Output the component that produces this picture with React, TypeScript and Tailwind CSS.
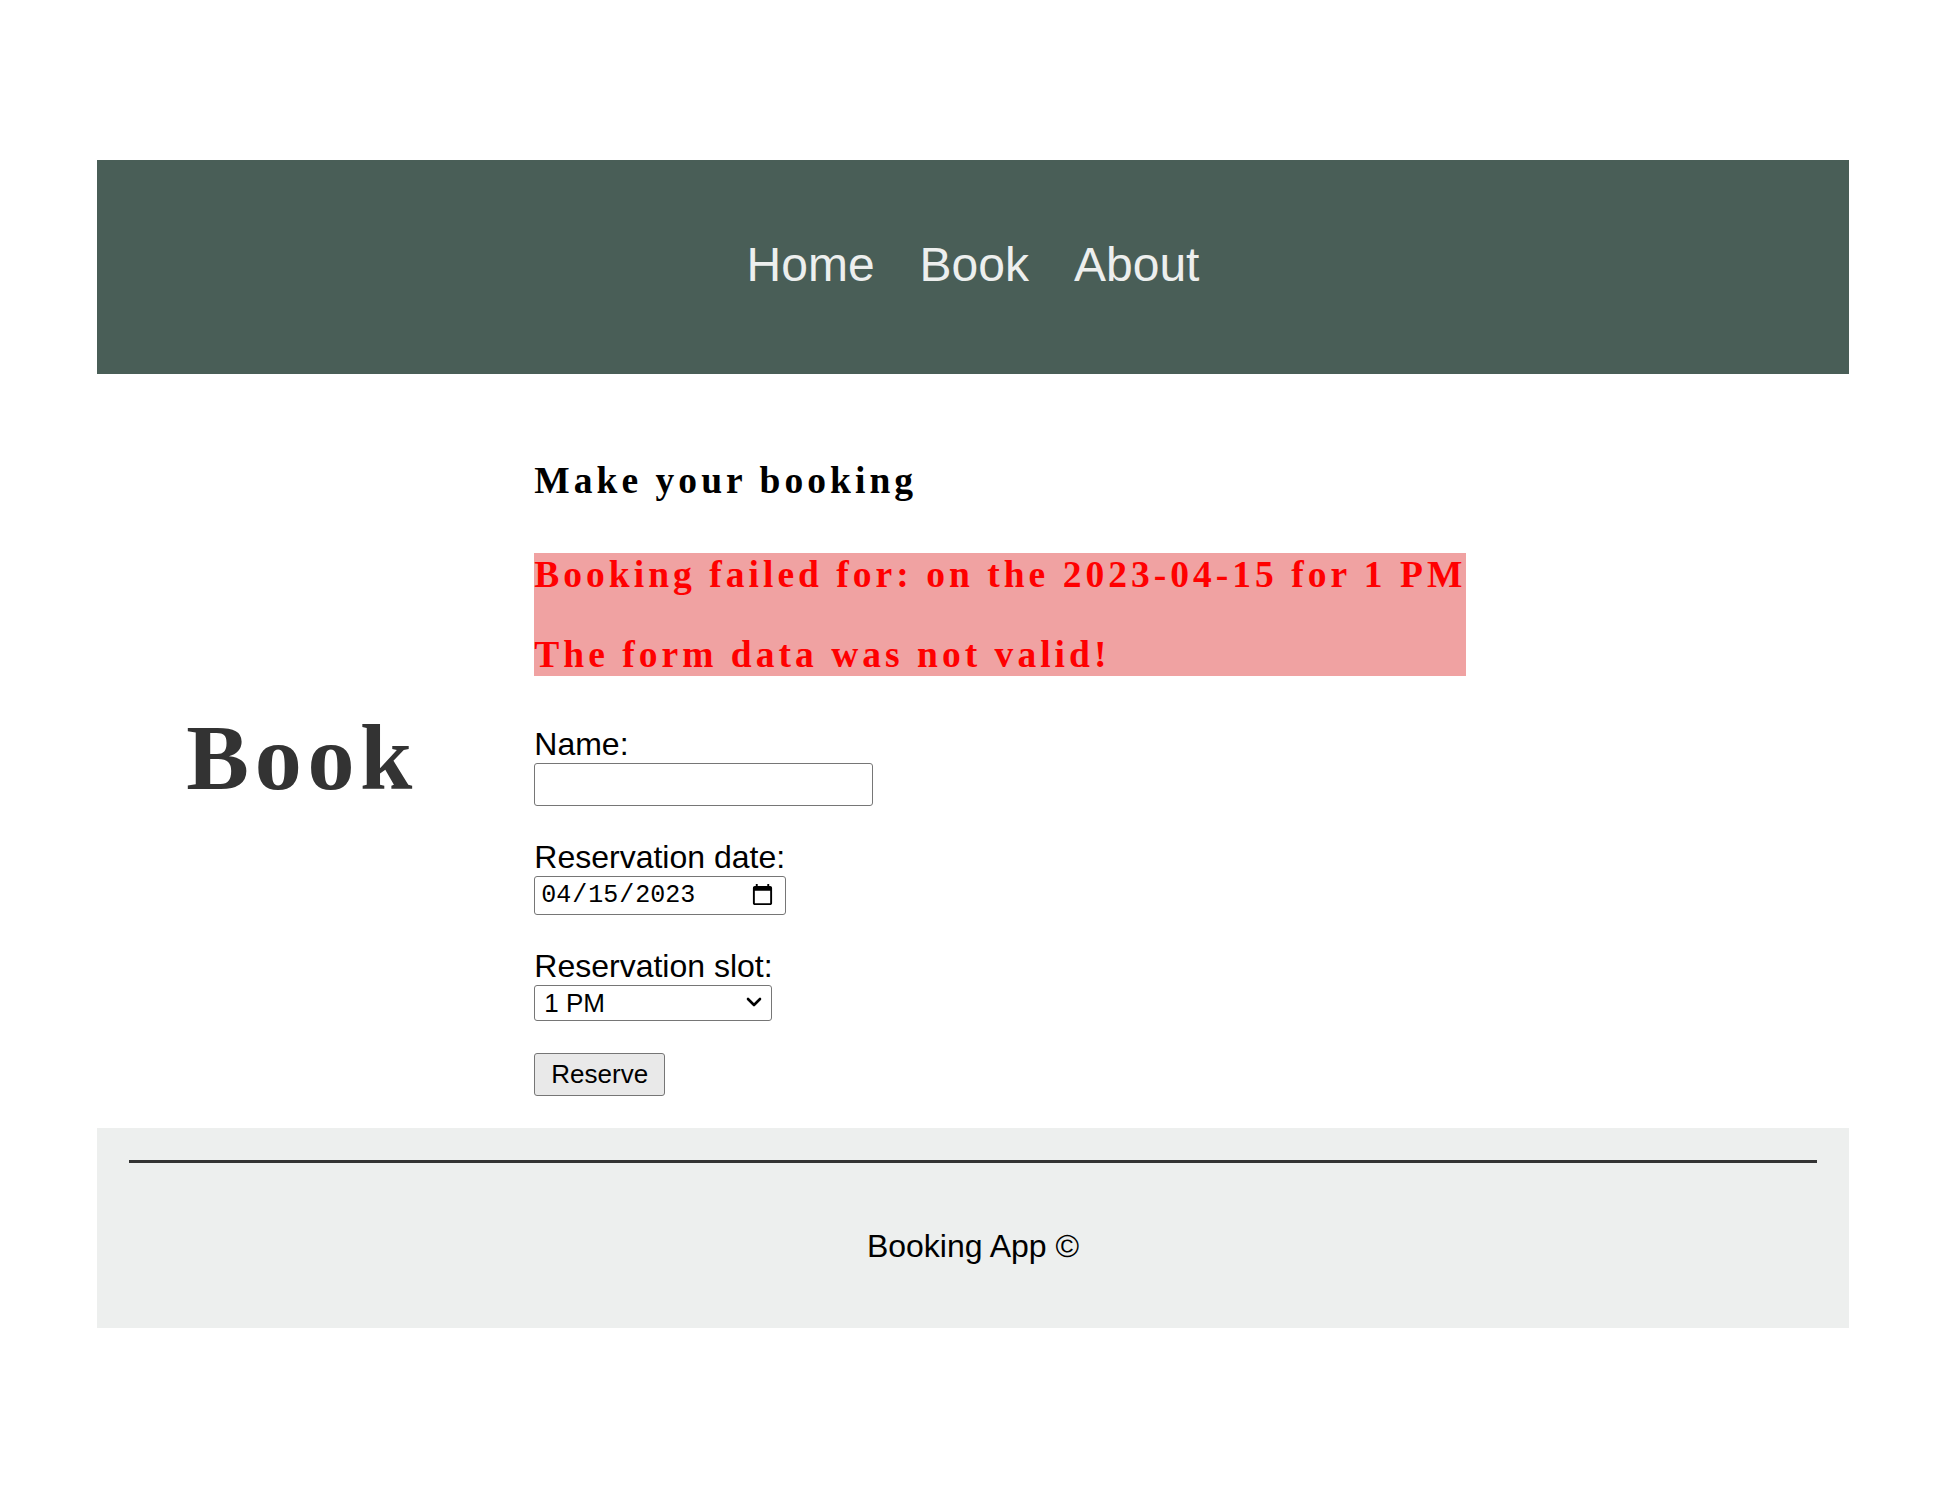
import React, { useState } from 'react';

const serif = "font-['Liberation_Serif','Times_New_Roman',serif]";
const sans = "font-['Liberation_Sans',Arial,sans-serif]";

function Header() {
  return (
    <header className="mx-auto flex h-[214px] w-[90%] items-center justify-center bg-[#495e57] pb-[5px]">
      <nav className={`${sans} flex gap-[45px] text-[48px] leading-[55px] text-[#edefee]`}>
        <a href="#">Home</a>
        <a href="#">Book</a>
        <a href="#">About</a>
      </nav>
    </header>
  );
}

function BookingForm() {
  const [name, setName] = useState('');
  const [date, setDate] = useState('2023-04-15');
  const [slot, setSlot] = useState('1 PM');

  function handleSubmit(e: React.FormEvent<HTMLFormElement>) {
    e.preventDefault();
  }

  return (
    <form onSubmit={handleSubmit} className={`${sans} mt-[49px] text-[32px] leading-[38px] text-black`}>
      <label htmlFor="name" className="block">
        Name:
      </label>
      <input
        id="name"
        type="text"
        value={name}
        onChange={(e) => setName(e.target.value)}
        className="block h-[43px] w-[339px] rounded-[3px] border border-[#767676] bg-white px-2 text-[25px]"
      />

      <label htmlFor="res-date" className="mt-8 block">
        Reservation date:
      </label>
      <input
        id="res-date"
        type="date"
        value={date}
        onChange={(e) => setDate(e.target.value)}
        className="block h-[39px] w-[252px] rounded-[3px] border border-[#767676] bg-white pl-[5px] pr-[8px] font-['Liberation_Mono',monospace] text-[25px] leading-[37px]"
      />

      <label htmlFor="res-time" className="mt-8 block">
        Reservation slot:
      </label>
      <div className="relative w-fit">
        <select
          id="res-time"
          value={slot}
          onChange={(e) => setSlot(e.target.value)}
          className="block h-[36px] w-[238px] appearance-none rounded-[3px] border border-[#767676] bg-white pl-[9px] text-[26px] leading-[34px]"
        >
          <option>12 PM</option>
          <option>1 PM</option>
          <option>2 PM</option>
          <option>3 PM</option>
        </select>
        <svg
          className="pointer-events-none absolute right-[10px] top-[11px]"
          width="16"
          height="12"
          viewBox="0 0 16 12"
          fill="none"
          stroke="#000"
          strokeWidth="2.6"
          strokeLinecap="round"
          strokeLinejoin="round"
        >
          <polyline points="2,3 8,9 14,3" />
        </svg>
      </div>

      <button
        type="submit"
        className="mt-8 block h-[43px] rounded-[3px] border border-[#767676] bg-[#e9e9e9] px-[16px] text-[26px] leading-[41px]"
      >
        Reserve
      </button>
    </form>
  );
}

export default function App() {
  return (
    <div className="min-h-screen bg-white pt-[160px]">
      <Header />

      <main className="mx-auto flex w-[90%] items-center pb-8 pl-[89px] pt-[85px]">
        <h1 className={`${serif} mb-[41px] w-[348px] shrink-0 text-[94px] font-bold leading-[94px] tracking-[5.7px] text-[#333333]`}>
          Book
        </h1>
        <div>
          <h2 className={`${serif} text-[37.5px] font-bold leading-[43px] tracking-[4.05px] text-black`}>
            Make your booking
          </h2>
          <div className={`${serif} mt-[51px] w-fit bg-[#f0a2a2] text-[37.5px] font-bold leading-[43px] tracking-[4.02px] text-[#ff0000]`}>
            <p>Booking failed for: on the 2023-04-15 for 1 PM</p>
            <p className="mt-[37px]">The form data was not valid!</p>
          </div>
          <BookingForm />
        </div>
      </main>

      <footer className="mx-auto w-[90%] bg-[#edefee] px-8 pb-16 pt-8">
        <hr className="border-t-[3px] border-[#333333]" />
        <p className={`${sans} mt-[65px] text-center text-[32px] leading-[36px] text-black`}>
          Booking App ©
        </p>
      </footer>
    </div>
  );
}
